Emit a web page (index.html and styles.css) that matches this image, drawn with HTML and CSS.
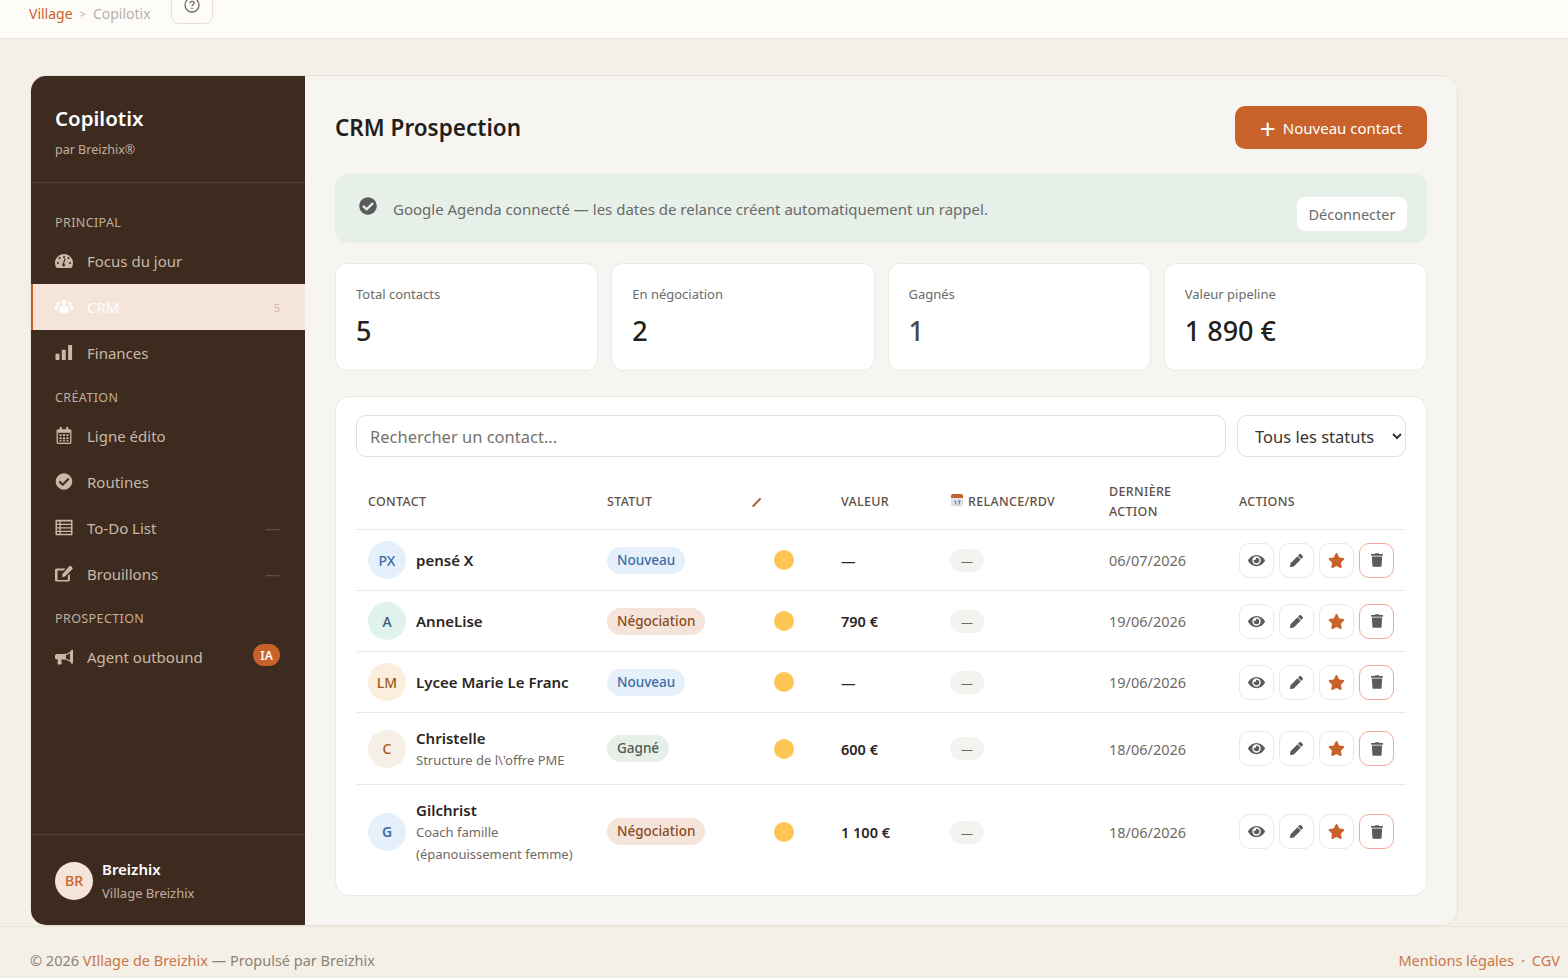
FILE: index.html
```html
<!DOCTYPE html>
<html lang="fr">
<head>
    <meta charset="UTF-8">
    <meta name="viewport" content="width=device-width, initial-scale=1.0">
    <title>CRM Prospection | Copilotix</title>
    <link rel="stylesheet" href="styles.css">
</head>
<body>

    <svg class="sprite" aria-hidden="true">
        <symbol id="i-gauge" viewBox="0 0 576 512"><path fill-rule="evenodd" d="M288 48C129 48 0 177 0 336c0 53 14 102 39 144 6 10 16 16 28 16h442c12 0 22-6 28-16 25-42 39-91 39-144C576 177 447 48 288 48zM288 112a32 32 0 1 1 0 64 32 32 0 0 1 0-64zM96 368a32 32 0 1 1 0-64 32 32 0 0 1 0 64zM144 208a32 32 0 1 1 0-64 32 32 0 0 1 0 64zM480 368a32 32 0 1 1 0-64 32 32 0 0 1 0 64zM432 208a32 32 0 1 1 0-64 32 32 0 0 1 0 64zM288 448a56 56 0 0 1-30-103l44-150c3-9 12-14 21-12 9 3 14 12 12 21l-44 144a56 56 0 0 1-3 100z"/></symbol>
        <symbol id="i-users" viewBox="0 0 640 512"><circle cx="320" cy="110" r="90"/><circle cx="110" cy="150" r="62"/><circle cx="530" cy="150" r="62"/><path d="M224 232h192c36 0 64 28 64 64v152c0 18-14 32-32 32H192c-18 0-32-14-32-32V296c0-36 28-64 64-64zM30 232h90c-12 16-24 38-24 66v90H30c-18 0-30-14-30-30v-66c0-34 0-60 30-60zM520 232h90c30 0 30 26 30 60v66c0 16-12 30-30 30h-66v-90c0-28-12-50-24-66z"/></symbol>
        <symbol id="i-bars" viewBox="0 0 512 512"><rect x="0" y="290" width="120" height="190" rx="14"/><rect x="190" y="170" width="120" height="310" rx="14"/><rect x="380" y="30" width="120" height="450" rx="14"/></symbol>
        <symbol id="i-calendar" viewBox="0 0 448 512"><path fill-rule="evenodd" d="M112 0h32c9 0 16 7 16 16v48h128V16c0-9 7-16 16-16h32c9 0 16 7 16 16v48h48c26 0 48 22 48 48v352c0 26-22 48-48 48H48c-26 0-48-22-48-48V112c0-26 22-48 48-48h48V16c0-9 7-16 16-16zM40 176v288c0 5 3 8 8 8h352c5 0 8-3 8-8V176zM88 216h64v56H88zM192 216h64v56h-64zM296 216h64v56h-64zM88 312h64v56H88zM192 312h64v56h-64zM296 312h64v56h-64zM88 400h64v40H88zM192 400h64v40h-64zM296 400h64v40h-64z"/></symbol>
        <symbol id="i-check" viewBox="0 0 512 512"><path d="M504 256c0 136.967-111.033 248-248 248S8 392.967 8 256 119.033 8 256 8s248 111.033 248 248zM227.314 387.314l184-184c6.248-6.248 6.248-16.379 0-22.627l-22.627-22.627c-6.248-6.249-16.379-6.249-22.628 0L216 308.118l-70.059-70.059c-6.248-6.248-16.379-6.248-22.628 0l-22.627 22.627c-6.248 6.248-6.248 16.379 0 22.627l104 104c6.249 6.249 16.379 6.249 22.628.001z"/></symbol>
        <symbol id="i-list" viewBox="0 0 512 512"><path fill-rule="evenodd" d="M32 24h448c18 0 32 14 32 32v400c0 18-14 32-32 32H32c-18 0-32-14-32-32V56c0-18 14-32 32-32zM44 72v72h72V72zM156 72v72h312V72zM44 184v64h72v-64zM156 184v64h312v-64zM44 288v64h72v-64zM156 288v64h312v-64zM44 392v52h72v-52zM156 392v52h312v-52z"/></symbol>
        <symbol id="i-edit" viewBox="0 0 576 512"><path d="M48 96h290l-64 64H96c-9 0-16 7-16 16v272c0 9 7 16 16 16h300c9 0 16-7 16-16V330l64-64v198c0 26-22 48-48 48H48c-26 0-48-22-48-48V144c0-26 22-48 48-48z"/><path d="M458 24c16-16 42-16 58 0l36 36c16 16 16 42 0 58L320 350l-100 20 20-100z"/></symbol>
        <symbol id="i-bullhorn" viewBox="0 0 576 512"><path fill-rule="evenodd" d="M544 40c-18 0-32 14-32 32v6C440 138 372 170 288 176H64c-35 0-64 29-64 64v48c0 35 29 64 64 64h30l-14 120c-2 22 14 40 36 40h68c20 0 35-18 32-38l-20-122h92c84 6 152 38 224 98v6c0 18 14 32 32 32s32-14 32-32V72c0-18-14-32-32-32zM480 150c-34 24-74 44-130 54v120c56 10 96 30 130 54z"/></symbol>
        <symbol id="i-eye" viewBox="0 0 576 512"><path d="M572.52 241.4C518.29 135.59 410.93 64 288 64S57.68 135.64 3.48 241.41a32.35 32.35 0 0 0 0 29.19C57.71 376.41 165.07 448 288 448s230.32-71.64 284.52-177.41a32.35 32.35 0 0 0 0-29.19zM288 400a144 144 0 1 1 144-144 143.93 143.93 0 0 1-144 144zm0-240a95.31 95.31 0 0 0-25.31 3.79 47.85 47.85 0 0 1-66.9 66.9A95.78 95.78 0 1 0 288 160z"/></symbol>
        <symbol id="i-pencil" viewBox="0 0 512 512"><path d="M497.9 142.1l-46.1 46.1c-4.7 4.7-12.3 4.7-17 0l-111-111c-4.7-4.7-4.7-12.3 0-17l46.1-46.1c18.7-18.7 49.1-18.7 67.9 0l60.1 60.1c18.8 18.7 18.8 49.1 0 67.9zM284.2 99.8L21.6 362.4.4 483.9c-2.9 16.4 11.4 30.6 27.8 27.8l121.5-21.3 262.6-262.6c4.7-4.7 4.7-12.3 0-17l-111-111c-4.8-4.7-12.4-4.7-17.1 0z"/></symbol>
        <symbol id="i-star" viewBox="0 0 576 512"><path d="M259.3 17.8L194 150.2 47.9 171.5c-26.2 3.8-36.7 36.1-17.7 54.6l105.7 103-25 145.5c-4.5 26.3 23.2 46 46.4 33.7L288 439.6l130.7 68.7c23.2 12.2 50.9-7.4 46.4-33.7l-25-145.5 105.7-103c19-18.5 8.5-50.8-17.7-54.6L382 150.2 316.7 17.8c-11.7-23.6-45.6-23.9-57.4 0z"/></symbol>
        <symbol id="i-trash" viewBox="0 0 448 512"><path d="M432 32H312l-9.4-18.7A24 24 0 0 0 281.1 0H166.8a23.72 23.72 0 0 0-21.4 13.3L136 32H16A16 16 0 0 0 0 48v32a16 16 0 0 0 16 16h416a16 16 0 0 0 16-16V48a16 16 0 0 0-16-16zM53.2 467a48 48 0 0 0 47.9 45h245.8a48 48 0 0 0 47.9-45L416 128H32z"/></symbol>
    </svg>

    <header class="topbar">
        <nav class="crumbs">
            <a class="crumb-link">Village</a>
            <span class="crumb-sep">&gt;</span>
            <span class="crumb-current">Copilotix</span>
        </nav>
        <button class="help-btn" type="button">
            <svg class="help-icon" viewBox="0 0 16 16"><circle cx="8" cy="8" r="7" fill="none" stroke="currentColor" stroke-width="1.3"/><path d="M5.9 6.2c0-1.2 1-1.9 2.1-1.9s2.1.7 2.1 1.8c0 1.6-2.1 1.6-2.1 3.2" fill="none" stroke="currentColor" stroke-width="1.3"/><circle cx="8" cy="11.6" r=".8" fill="currentColor"/></svg>
        </button>
    </header>

    <div class="page">
        <div class="app">
            <aside class="sidebar">
                <div class="brand">
                    <div class="brand-name">Copilotix</div>
                    <div class="brand-sub">par Breizhix®</div>
                </div>

                <nav class="side-nav">
                    <div class="nav-label nav-label-first">PRINCIPAL</div>
                    <a class="nav-item"><svg class="nav-icon"><use href="#i-gauge"/></svg>Focus du jour</a>
                    <a class="nav-item active"><svg class="nav-icon"><use href="#i-users"/></svg>CRM<span class="nav-count">5</span></a>
                    <a class="nav-item"><svg class="nav-icon"><use href="#i-bars"/></svg>Finances</a>

                    <div class="nav-label">CRÉATION</div>
                    <a class="nav-item"><svg class="nav-icon"><use href="#i-calendar"/></svg>Ligne édito</a>
                    <a class="nav-item"><svg class="nav-icon"><use href="#i-check"/></svg>Routines</a>
                    <a class="nav-item"><svg class="nav-icon"><use href="#i-list"/></svg>To-Do List<span class="nav-dash">—</span></a>
                    <a class="nav-item"><svg class="nav-icon"><use href="#i-edit"/></svg>Brouillons<span class="nav-dash">—</span></a>

                    <div class="nav-label">PROSPECTION</div>
                    <a class="nav-item"><svg class="nav-icon"><use href="#i-bullhorn"/></svg>Agent outbound<span class="nav-ia">IA</span></a>
                </nav>

                <div class="side-user">
                    <div class="user-avatar">BR</div>
                    <div>
                        <div class="user-name">Breizhix</div>
                        <div class="user-org">Village Breizhix</div>
                    </div>
                </div>
            </aside>

            <main class="main">
                <div class="title-row">
                    <h1>CRM Prospection</h1>
                    <button class="btn-primary" type="button"><span class="btn-plus">+</span>Nouveau contact</button>
                </div>

                <div class="agenda-banner">
                    <div class="agenda-text">
                        <svg class="agenda-icon"><use href="#i-check"/></svg>
                        <span>Google Agenda connecté — les dates de relance créent automatiquement un rappel.</span>
                    </div>
                    <button class="btn-light" type="button">Déconnecter</button>
                </div>

                <div class="stats">
                    <div class="stat-card"><div class="stat-label">Total contacts</div><div class="stat-value">5</div></div>
                    <div class="stat-card"><div class="stat-label">En négociation</div><div class="stat-value">2</div></div>
                    <div class="stat-card"><div class="stat-label">Gagnés</div><div class="stat-value stat-won">1</div></div>
                    <div class="stat-card"><div class="stat-label">Valeur pipeline</div><div class="stat-value">1 890 €</div></div>
                </div>

                <section class="crm-card">
                    <div class="filters">
                        <input class="search-input" type="text" placeholder="Rechercher un contact...">
                        <select class="status-select">
                            <option>Tous les statuts</option>
                        </select>
                    </div>

                    <table class="crm-table">
                        <colgroup>
                            <col class="col-contact"><col class="col-status"><col class="col-temp"><col class="col-value"><col class="col-next"><col class="col-last"><col class="col-actions">
                        </colgroup>
                        <thead>
                            <tr>
                                <th>CONTACT</th>
                                <th>STATUT</th>
                                <th><svg class="th-pencil" viewBox="0 0 12 12"><path d="M2 10.2 9.6 2.4" stroke="#b0593a" stroke-width="2"/><path d="M1.2 11 2 9.4l1 1z" fill="#444"/></svg></th>
                                <th>VALEUR</th>
                                <th><svg class="th-cal" viewBox="0 0 14 14"><rect x="1" y="1" width="12" height="12.5" rx="2" fill="#dfe3e8"/><path d="M1 5V3a2 2 0 0 1 2-2h8a2 2 0 0 1 2 2v2z" fill="#c8622a"/><path d="M4.5 8h1.2v3.6M8 8h2.2L8.6 11.6" fill="none" stroke="#5a6f8c" stroke-width="1"/></svg>RELANCE/RDV</th>
                                <th>DERNIÈRE<br>ACTION</th>
                                <th>ACTIONS</th>
                            </tr>
                        </thead>
                        <tbody>
                            <tr>
                                <td><div class="contact"><span class="avatar av-blue">PX</span><div><div class="contact-name">pensé X</div></div></div></td>
                                <td><span class="badge badge-new">Nouveau</span></td>
                                <td class="cell-dot"><span class="dot"></span></td>
                                <td class="cell-value">—</td>
                                <td><span class="next-pill">—</span></td>
                                <td class="cell-date">06/07/2026</td>
                                <td><div class="actions"><button class="act"><svg class="act-eye"><use href="#i-eye"/></svg></button><button class="act"><svg class="act-pen"><use href="#i-pencil"/></svg></button><button class="act"><svg class="act-star"><use href="#i-star"/></svg></button><button class="act act-del"><svg class="act-trash"><use href="#i-trash"/></svg></button></div></td>
                            </tr>
                            <tr>
                                <td><div class="contact"><span class="avatar av-green">A</span><div><div class="contact-name">AnneLise</div></div></div></td>
                                <td><span class="badge badge-nego">Négociation</span></td>
                                <td class="cell-dot"><span class="dot"></span></td>
                                <td class="cell-value">790 €</td>
                                <td><span class="next-pill">—</span></td>
                                <td class="cell-date">19/06/2026</td>
                                <td><div class="actions"><button class="act"><svg class="act-eye"><use href="#i-eye"/></svg></button><button class="act"><svg class="act-pen"><use href="#i-pencil"/></svg></button><button class="act"><svg class="act-star"><use href="#i-star"/></svg></button><button class="act act-del"><svg class="act-trash"><use href="#i-trash"/></svg></button></div></td>
                            </tr>
                            <tr>
                                <td><div class="contact"><span class="avatar av-sand">LM</span><div><div class="contact-name">Lycee Marie Le Franc</div></div></div></td>
                                <td><span class="badge badge-new">Nouveau</span></td>
                                <td class="cell-dot"><span class="dot"></span></td>
                                <td class="cell-value">—</td>
                                <td><span class="next-pill">—</span></td>
                                <td class="cell-date">19/06/2026</td>
                                <td><div class="actions"><button class="act"><svg class="act-eye"><use href="#i-eye"/></svg></button><button class="act"><svg class="act-pen"><use href="#i-pencil"/></svg></button><button class="act"><svg class="act-star"><use href="#i-star"/></svg></button><button class="act act-del"><svg class="act-trash"><use href="#i-trash"/></svg></button></div></td>
                            </tr>
                            <tr>
                                <td><div class="contact"><span class="avatar av-cream">C</span><div><div class="contact-name">Christelle</div><div class="contact-sub">Structure de l\'offre PME</div></div></div></td>
                                <td><span class="badge badge-won">Gagné</span></td>
                                <td class="cell-dot"><span class="dot"></span></td>
                                <td class="cell-value">600 €</td>
                                <td><span class="next-pill">—</span></td>
                                <td class="cell-date">18/06/2026</td>
                                <td><div class="actions"><button class="act"><svg class="act-eye"><use href="#i-eye"/></svg></button><button class="act"><svg class="act-pen"><use href="#i-pencil"/></svg></button><button class="act"><svg class="act-star"><use href="#i-star"/></svg></button><button class="act act-del"><svg class="act-trash"><use href="#i-trash"/></svg></button></div></td>
                            </tr>
                            <tr>
                                <td><div class="contact"><span class="avatar av-blue av-g">G</span><div><div class="contact-name">Gilchrist</div><div class="contact-sub">Coach famille<br>(épanouissement femme)</div></div></div></td>
                                <td><span class="badge badge-nego">Négociation</span></td>
                                <td class="cell-dot"><span class="dot"></span></td>
                                <td class="cell-value">1 100 €</td>
                                <td><span class="next-pill">—</span></td>
                                <td class="cell-date">18/06/2026</td>
                                <td><div class="actions"><button class="act"><svg class="act-eye"><use href="#i-eye"/></svg></button><button class="act"><svg class="act-pen"><use href="#i-pencil"/></svg></button><button class="act"><svg class="act-star"><use href="#i-star"/></svg></button><button class="act act-del"><svg class="act-trash"><use href="#i-trash"/></svg></button></div></td>
                            </tr>
                        </tbody>
                    </table>
                </section>
            </main>
        </div>
    </div>

    <footer class="site-footer">
        <div>© 2026 <a class="foot-link">VIllage de Breizhix</a> — Propulsé par Breizhix</div>
        <div class="foot-right"><a class="foot-link">Mentions légales</a><span class="foot-sep">·</span><a class="foot-link">CGV</a></div>
    </footer>

</body>
</html>
```

FILE: styles.css
```css
:root { --cream: #f4efe7; --main: #f7f5f1; --brown: #3d2b1f; --accent: #c8622a; --line: #ece9e4; --text: #2a2320; --muted: #6f6a66; --font: "Noto Sans", "Open Sans", sans-serif; }
* { box-sizing: border-box; }
body { margin: 0; background: var(--cream); color: var(--text); font-family: var(--font); height: 978px; overflow: hidden; }
.sprite { display: none; }

/* TOPBAR */
.topbar { height: 39px; background: #fefcf8; border-bottom: 1px solid #ebe5d9; display: flex; align-items: flex-end; gap: 20px; padding: 0 0 14px 29px; overflow: hidden; }
.crumbs { display: flex; gap: 7px; font-size: 14px; line-height: 20px; margin-bottom: 0; }
.crumb-link { color: var(--accent); }
.crumb-sep { color: #b9b3ab; font-size: 11px; }
.crumb-current { color: #b5b0a9; }
.help-btn { width: 42px; height: 42px; flex: none; background: transparent; border: 1px solid #e6e0d6; border-radius: 8px; color: #6f6a66; display: flex; align-items: flex-end; justify-content: center; padding: 0 0 10px; }
.help-icon { width: 16px; height: 16px; }

/* APP */
.page { padding: 36px 110px 0 30px; }
.app { display: flex; height: 851px; background: var(--main); border: 1px solid #e8e4dc; border-radius: 16px; overflow: hidden; }

.sidebar { width: 275px; flex: none; margin: -1px 0 -1px -1px; background: var(--brown); color: #c9b8a8; display: flex; flex-direction: column; }
.brand { height: 108px; padding: 29px 25px 0; border-bottom: 1px solid #524235; }
.brand-name { font-size: 20.5px; line-height: 28px; font-weight: 600; color: #fff; }
.brand-sub { font-size: 12.5px; line-height: 18px; margin-top: 9px; color: #c2b09f; }

.side-nav { flex: 1; }
.nav-label { font-size: 12.5px; line-height: 18px; letter-spacing: 0.4px; color: #c2ae9b; padding: 0 25px; margin-top: 13px; margin-bottom: 6px; }
.nav-label-first { margin-top: 31px; }
.nav-item { height: 46px; display: flex; align-items: center; padding: 0 25px; font-size: 15px; color: #c9b8a8; }
.nav-icon { width: 18px; height: 17px; margin-right: 14px; fill: #c9b8a8; flex: none; position: relative; top: -1px; }
.nav-item.active { background: #f5e4d9; color: #fff; border-left: 3px solid var(--accent); padding-left: 22px; }
.nav-item.active .nav-icon { fill: #fff; }
.nav-count { margin-left: auto; font-size: 11px; color: #c9b8a8; }
.nav-dash { margin-left: auto; color: #5f4f43; font-size: 15px; }
.nav-ia { margin-left: auto; width: 27px; height: 22px; background: var(--accent); color: #fff; border-radius: 11px; font-size: 12px; font-weight: 600; display: flex; align-items: center; justify-content: center; position: relative; top: -2px; }

.side-user { height: 92px; border-top: 1px solid #524235; padding: 0 25px; display: flex; align-items: center; gap: 9px; }
.user-avatar { width: 38px; height: 38px; border-radius: 50%; background: #f5e4d9; color: var(--accent); font-size: 14px; font-weight: 500; display: flex; align-items: center; justify-content: center; }
.user-name { font-size: 15px; line-height: 20px; font-weight: 600; color: #fff; }
.user-org { font-size: 13px; line-height: 18px; margin-top: 5px; color: #c2ae9b; }

/* MAIN */
.main { flex: 1; padding: 30px; min-width: 0; }
.title-row { height: 43px; display: flex; align-items: center; justify-content: space-between; margin-bottom: 25px; }
h1 { font-size: 22.5px; font-weight: 600; margin: 0; color: #231f1c; }
.btn-primary { height: 43px; width: 192px; background: var(--accent); border: none; border-radius: 10px; color: #fff; font-family: var(--font); font-size: 15px; display: flex; align-items: center; justify-content: center; gap: 7px; }
.btn-plus { font-size: 28px; line-height: 24px; font-weight: 400; }

.agenda-banner { height: 69px; background: #e6efe8; border-radius: 12px; padding: 23px 20px 0 24px; display: flex; justify-content: space-between; align-items: flex-start; margin-bottom: 20px; }
.agenda-text { display: flex; gap: 16px; font-size: 15px; line-height: 24px; color: #6a6a68; }
.agenda-icon { width: 18px; height: 18px; fill: #5b5b5b; margin-top: 0; }
.btn-light { width: 110px; height: 34px; background: #fff; border: none; border-radius: 8px; font-family: var(--font); font-size: 14.5px; color: #6a6a68; }

.stats { display: grid; grid-template-columns: repeat(4, 1fr); gap: 13px; margin-bottom: 25px; }
.stat-card { height: 108px; background: #fff; border: 1px solid var(--line); border-radius: 12px; padding: 21px 20px 0; }
.stat-label { font-size: 13px; line-height: 18px; color: #6b6b6b; }
.stat-value { font-size: 27px; line-height: 38px; font-weight: 500; margin-top: 9px; color: #231f1c; }
.stat-won { color: #4a4a48; }

.crm-card { background: #fff; border: 1px solid var(--line); border-radius: 14px; padding: 18px 20px 16px; }
.filters { display: flex; gap: 11px; margin-bottom: 13px; }
.search-input { flex: 1; height: 42px; border: 1px solid #e2dfda; border-radius: 10px; padding: 0 13px; font-family: var(--font); font-size: 16.5px; background: #fff; }
.search-input::placeholder { color: #77726d; opacity: 1; }
.status-select { width: 169px; height: 42px; border: 1px solid #e2dfda; border-radius: 10px; padding: 0 13px; font-family: var(--font); font-size: 16.5px; background: #fff; color: #3a3532; }

.crm-table { width: 100%; table-layout: fixed; border-collapse: collapse; }
.col-contact { width: 239px; }
.col-status { width: 144px; }
.col-temp { width: 90px; }
.col-value { width: 109px; }
.col-next { width: 159px; }
.col-last { width: 130px; }
.col-actions { width: 179px; }
.crm-table th { text-align: left; font-size: 12.5px; line-height: 20px; font-weight: 500; letter-spacing: 0.3px; color: #5f5047; padding: 12px 12px 7px; border-bottom: 1px solid var(--line); }
.crm-table td { padding: 0 12px; border-bottom: 1px solid var(--line); height: 61px; font-size: 14.5px; }
.crm-table tbody tr:last-child td { border-bottom: none; height: 94px; }
.crm-table tbody tr:nth-child(4) td { height: 72px; }
.th-pencil { width: 12px; height: 12px; display: block; }
.th-cal { width: 14px; height: 14px; margin-right: 4px; vertical-align: -1px; }

.contact { display: flex; align-items: center; gap: 10px; }
.avatar { width: 38px; height: 38px; flex: none; border-radius: 50%; display: flex; align-items: center; justify-content: center; font-size: 14px; font-weight: 500; margin-left: 0; }
.av-blue { background: #e6f0fa; color: #3b6ea5; }
.av-green { background: #e0f2ec; color: #3d5a75; }
.av-sand { background: #fbeedd; color: #9a5a24; }
.av-cream { background: #f6efe6; color: #a85a28; }
.av-g { font-weight: 600; }
.contact-name { font-size: 15px; line-height: 22px; font-weight: 600; color: #2b2523; }
.contact-sub { font-size: 13px; line-height: 22px; color: #6f6a66; }

.badge { display: inline-block; height: 27px; line-height: 27px; padding: 0 10px; border-radius: 14px; font-size: 13.5px; font-weight: 500; }
.badge-new { background: #e6f0fa; color: #3b6ea5; }
.badge-nego { background: #f5e4d9; color: #8b4a1f; }
.badge-won { background: #e6efe8; color: #4f5a56; }

.cell-dot { text-align: center; }
.dot { display: inline-block; width: 20px; height: 20px; border-radius: 50%; background: #fdc654; vertical-align: middle; position: relative; top: -1px; }
.cell-value { font-weight: 600; color: #2b2523; }
.next-pill { display: inline-block; width: 34px; height: 23px; line-height: 26px; border-radius: 12px; background: #f5f3ef; text-align: center; color: #6f6a66; font-size: 12px; vertical-align: middle; }
.cell-date { color: #6f6a66; }

.actions { display: flex; gap: 5px; }
.act { width: 35px; height: 35px; padding: 0; background: #fff; border: 1px solid #ece9e4; border-radius: 10px; display: flex; align-items: center; justify-content: center; }
.act-del { border-color: #f2a89c; }
.act svg { display: block; }
.act-eye { width: 17px; height: 15px; fill: #5b5b5b; }
.act-pen { width: 13px; height: 13px; fill: #5b5b5b; }
.act-star { width: 17px; height: 15px; fill: var(--accent); }
.act-trash { width: 12px; height: 14px; fill: #5b5b5b; }

/* FOOTER */
.site-footer { height: 52px; margin-top: 0; border-top: 1px solid #ebe5d9; display: flex; justify-content: space-between; align-items: center; padding: 14px 8px 0 30px; font-size: 14.5px; color: #8e8275; }
.foot-link { color: #c9764a; }
.foot-sep { margin: 0 7px; }
```
